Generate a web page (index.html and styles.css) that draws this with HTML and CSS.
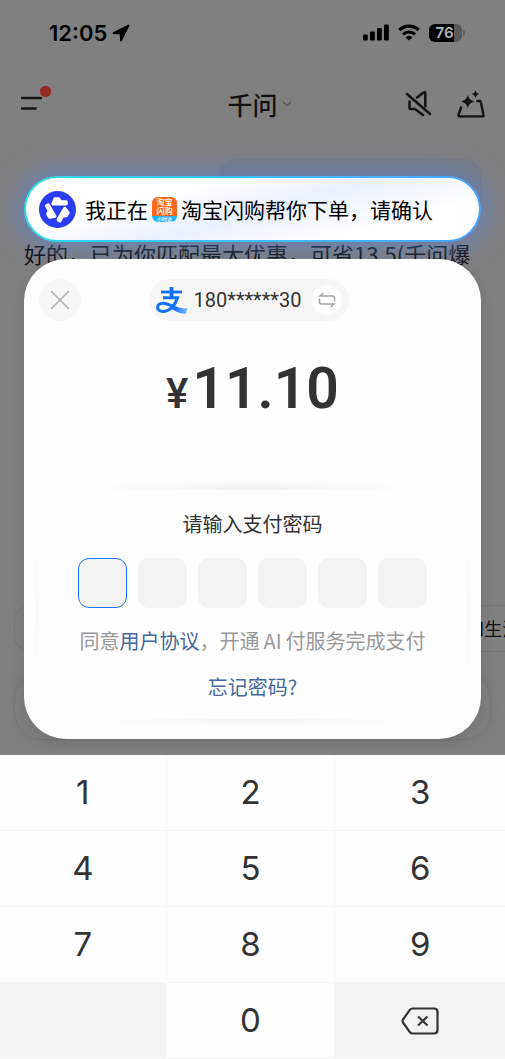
FILE: index.html
```html
<!DOCTYPE html>
<html lang="zh-CN">
<head>
<meta charset="utf-8">
<meta name="viewport" content="width=device-width, initial-scale=1">
<title>千问</title>
<link rel="stylesheet" href="styles.css">
</head>
<body>
<div class="screen">
  <div class="page">
    <div class="status">
      <div class="status-side">
        <span>12:05</span>
        <svg width="18" height="18" viewBox="0 0 18 18"><path d="M16.500 1.500 1.500 9l7 .5.500 7z" fill="#000" stroke="#000" stroke-width="1.800" stroke-linejoin="round"/></svg>
      </div>
      <div class="status-side status-icons">
        <svg width="26" height="17" viewBox="0 0 26 17"><rect y="10.500" width="4.800" height="6" rx="1.300"/><rect x="7" y="7.500" width="4.800" height="9" rx="1.300"/><rect x="14" y="4" width="4.800" height="12.500" rx="1.300"/><rect x="21" y=".5" width="4.800" height="16" rx="1.300"/></svg>
        <svg width="22" height="17" viewBox="0 0 22 17"><g fill="none" stroke="#000" stroke-width="3.200"><path d="M1.300 6.200a13.800 13.800 0 0 1 19.400 0"/><path d="M5 10.400a8.700 8.700 0 0 1 12 0"/></g><path d="M11 16.500 7.700 13.400a4.800 4.800 0 0 1 6.600 0z"/></svg>
        <span class="battery"><b>76</b></span>
      </div>
    </div>
    <header class="topbar">
      <button class="icon-btn menu" aria-label="菜单">
        <svg width="34" height="32" viewBox="0 0 34 32"><path d="M1 15h21M1 25.500h15.500" stroke="#151515" stroke-width="2.600" fill="none"/><circle cx="25.500" cy="8.500" r="7" fill="#808080"/><circle cx="25.500" cy="8.500" r="5.700" fill="#902b23"/></svg>
      </button>
      <h1 class="title">千问 <svg width="10" height="6" viewBox="0 0 10 6"><path d="m1 1 4 3.500L9 1" fill="none" stroke="#555" stroke-width="1.200"/></svg></h1>
      <div class="tools">
        <button class="icon-btn" aria-label="静音">
          <svg width="28" height="28" viewBox="0 0 28 28" fill="none" stroke="#151515" stroke-width="2.600" stroke-linecap="round" stroke-linejoin="round"><path d="m2 4 23 20M12 7.500l6.500-5c.9-.6 1.800-.2 1.800.8v13M4.500 11.500V18c0 .6.4 1 1 1h4.500l8 6"/></svg>
        </button>
        <button class="icon-btn" aria-label="新对话">
          <svg width="28" height="28" viewBox="0 0 28 28"><path d="M4 17.500 1.500 25q-.4 1.400 1 1.400h23q1.400 0 1-1.400L23.800 12q-.2-1-1.200-1h-2.200" fill="none" stroke="#151515" stroke-width="2.400" stroke-linecap="round"/><path d="M10.800 5q1.200 5.200 6.500 6.500-5.300 1.300-6.500 6.500-1.200-5.200-6.500-6.500 5.300-1.300 6.500-6.500zM18.500.4q.8 2.900 3.700 3.700-2.900.8-3.700 3.700-.8-2.900-3.700-3.700 2.900-.8 3.700-3.700z" fill="#151515"/></svg>
        </button>
      </div>
    </header>
    <main class="chat">
      <div class="bubble"></div>
      <p class="reply">好的，已为你匹配最大优惠，可省13.5(千问爆</p>
    </main>
    <div class="chips">
      <div class="chip"></div>
      <div class="chip chip-cut">AI生活</div>
    </div>
    <div class="composer"></div>
  </div>

  <div class="overlay">
    <div class="banner">
      <svg class="brand" width="37" height="37" viewBox="-18 -18 36 36">
        <circle r="18" fill="#2b3df2"/>
        <g fill="#fff" stroke="#fff" stroke-width="3" stroke-linejoin="round">
          <path id="arm" d="M-2.500-10.500H1L3-7.500H8.500V-5.500H-4.500z"/>
          <use href="#arm" transform="rotate(120)"/>
          <use href="#arm" transform="rotate(240)"/>
        </g>
      </svg>
      <p class="banner-text">我正在 <span class="shop"><span>淘宝</span><span>闪购</span><small>小时达</small></span> 淘宝闪购帮你下单，请确认</p>
    </div>

    <section class="sheet" aria-label="支付">
      <div class="sheet-head">
        <button class="close" aria-label="关闭"><svg width="20" height="20" viewBox="0 0 20 20"><path d="m1 1 18 18M19 1 1 19" stroke="#b0b0b0" stroke-width="1.600"/></svg></button>
        <div class="account">
          <svg width="32" height="28" viewBox="0 0 32 28">
            <defs><linearGradient id="ali"><stop offset=".3" stop-color="#1272ff"/><stop offset="1" stop-color="#8fbcff"/></linearGradient></defs>
            <g fill="none" stroke="#1272ff"><path d="M5 6h21" stroke-width="2.800"/><path d="M15.500 1v10.500" stroke-width="3.800"/><path d="M7 11.800h14.500C19.500 18.500 14 25.500 7 25.500c-7.500 0-7-8.300 0-8.300 4 0 8 2.200 12 4.300" stroke-width="3"/></g>
            <path d="M15.500 18.400c5.500 2.900 10 3.900 16 3.900l-1.500 5.500c-6.500 0-11.500-3-16-5.800z" fill="url(#ali)"/>
          </svg>
          <span>180******30</span>
          <button class="swap" aria-label="切换账号"><svg width="18" height="16" viewBox="0 0 18 16" fill="none" stroke="#a2a2a2" stroke-width="1.500"><path d="M5.500 1 2 4h12.500q2 0 2 2v3.500M1.500 6.500V10q0 2 2 2H16l-3.500 3"/></svg></button>
        </div>
      </div>
      <div class="amount"><span class="yen">¥</span>11.10</div>
      <form class="pay">
        <h2 class="prompt">请输入支付密码</h2>
        <div class="cells">
          <input class="cell active" type="password" maxlength="1" aria-label="密码第1位">
          <input class="cell" type="password" maxlength="1" aria-label="密码第2位">
          <input class="cell" type="password" maxlength="1" aria-label="密码第3位">
          <input class="cell" type="password" maxlength="1" aria-label="密码第4位">
          <input class="cell" type="password" maxlength="1" aria-label="密码第5位">
          <input class="cell" type="password" maxlength="1" aria-label="密码第6位">
        </div>
        <p class="terms">同意<a href="#terms">用户协议</a>，开通<span class="latin">AI</span>付服务完成支付</p>
        <a class="forgot" href="#forgot">忘记密码?</a>
      </form>
    </section>

    <div class="keypad">
      <button>1</button><button>2</button><button>3</button>
      <button>4</button><button>5</button><button>6</button>
      <button>7</button><button>8</button><button>9</button>
      <span class="blank"></span><button>0</button>
      <button class="blank" aria-label="删除"><svg width="38" height="28" viewBox="0 0 38 28" fill="none" stroke="#333" stroke-width="2.200" stroke-linejoin="round"><path d="M11.500 1.500H33q3.500 0 3.500 3.500v18q0 3.500-3.500 3.500H11.500q-1.500 0-2.500-1.200L2 15.500q-1-1.500 0-3L9 2.700q1-1.200 2.500-1.200z"/><path d="m17 9.500 9.500 9M26.500 9.500l-9.500 9"/></svg></button>
    </div>
  </div>
</div>
</body>
</html>
```

FILE: styles.css
```css
* { box-sizing: border-box; }

body {
  margin: 0;
  background: #808080;
  color: #111;
  font-family: "Noto Sans CJK SC", sans-serif;
}

p, h1, h2 { margin: 0; font-weight: 400; }
svg { display: block; flex: none; }
a { color: #45689c; text-decoration: none; }

button {
  display: grid;
  place-items: center;
  padding: 0;
  border: 0;
  background: none;
  font: inherit;
  color: inherit;
}

/* The page and the payment layer share one grid cell. */
.screen {
  display: grid;
  grid-template-columns: minmax(0, 1fr);
  min-height: 100vh;
}

.page, .overlay {
  grid-area: 1 / 1;
  display: flex;
  flex-direction: column;
}

/* Status bar */
.status {
  display: flex;
  justify-content: space-between;
  align-items: center;
  height: 65px;
  padding: 0 43px 0 49px;
  color: #000;
  font: 600 22px/1 Inter, sans-serif;
}

.status-side { display: flex; align-items: center; gap: 5px; }
.status-icons { gap: 9px; }

.battery {
  position: relative;
  display: grid;
  place-items: center;
  width: 33px;
  height: 18px;
  padding-right: 2px;
  border-radius: 6px;
  background: linear-gradient(90deg, #000 76%, #595959 76%);
  color: #b4b4b4;
  font-size: 15px;
}

.battery::after {
  content: "";
  position: absolute;
  left: 100%;
  top: 6px;
  width: 2px;
  height: 6px;
  margin-left: 1px;
  border-radius: 0 2px 2px 0;
  background: #606060;
}

.battery b { font-weight: 600; }

/* Top bar */
.topbar {
  display: grid;
  grid-template-columns: 1fr auto 1fr;
  align-items: center;
  height: 78px;
  padding: 0 20px;
}

.menu { justify-self: start; padding-bottom: 10px; }

.title {
  display: flex;
  align-items: center;
  gap: 4px;
  padding-left: 14px;
  font-size: 25px;
  line-height: 36px;
  font-weight: 500;
}

.tools { display: flex; justify-self: end; gap: 24px; }

/* Conversation */
.chat { flex: 1; padding: 16px 24px 0; }

.bubble {
  width: 262px;
  height: 66px;
  margin-left: auto;
  border-radius: 16px;
  background: #797b81;
}

.reply {
  margin-top: 12px;
  overflow: hidden;
  white-space: nowrap;
  font-size: 22px;
  line-height: 32px;
}

.chips { display: flex; gap: 6px; padding-left: 14px; }

.chip {
  flex: 1;
  height: 47px;
  border: 1px solid #767676;
  border-radius: 16px;
}

.chip-cut {
  flex: none;
  width: 46px;
  padding-left: 8px;
  overflow: hidden;
  border-right: 0;
  border-radius: 16px 0 0 16px;
  white-space: nowrap;
  font-size: 18px;
  line-height: 45px;
}

.composer {
  height: 68px;
  margin: 20px 14px 319px;
  border: 1px solid #777;
  border-radius: 28px;
  box-shadow: 0 0 14px rgba(0, 0, 0, .06);
}

/* Payment layer */
.overlay { z-index: 1; padding-top: 176px; }

.banner {
  display: flex;
  align-items: center;
  gap: 9px;
  height: 66px;
  margin: 0 24px;
  padding: 0 13px;
  border: 2px solid transparent;
  border-radius: 33px;
  background:
    linear-gradient(165deg, #fff 30%, #e9f0ff 52%, #fff 78%) padding-box,
    linear-gradient(90deg, #2bdbe9, #4ba3ff) border-box;
  box-shadow: 0 0 26px 6px rgba(92, 128, 214, .62);
}

.banner-text {
  display: flex;
  align-items: center;
  gap: 4px;
  white-space: nowrap;
  color: #000;
  font-size: 21px;
  line-height: 32px;
}

.shop {
  display: flex;
  flex-direction: column;
  align-items: center;
  width: 25px;
  height: 25px;
  overflow: hidden;
  border-radius: 6px;
  background: linear-gradient(#ff6a1a 0 19px, #25b4f5 19px);
  color: #fff;
  font-size: 8px;
  line-height: 9px;
  font-weight: 500;
}

.shop small { font-size: 5px; line-height: 7px; }

.sheet {
  margin: 17px 24px 16px;
  padding-top: 20px;
  border-radius: 42px;
  background: #fefefe;
  box-shadow: 0 4px 14px rgba(0, 0, 0, .12);
  color: #333;
}

.sheet-head {
  display: grid;
  grid-template-columns: 1fr auto 1fr;
  align-items: center;
  padding: 0 22px 0 15px;
}

.close {
  width: 42px;
  height: 42px;
  border-radius: 50%;
  background: #f7f7f7;
}

.account {
  display: flex;
  align-items: center;
  gap: 6px;
  height: 42px;
  padding: 0 7px;
  border-radius: 21px;
  background: #f6f6f6;
  font: 20px/1 Roboto, sans-serif;
}

.swap {
  width: 30px;
  height: 30px;
  margin-left: 5px;
  border-radius: 50%;
  background: #fff;
}

.amount {
  display: flex;
  justify-content: center;
  align-items: baseline;
  gap: 4px;
  padding: 34px 0 50px;
  font: 600 57px/68px Roboto, sans-serif;
}

.yen { font-size: 42px; font-weight: 500; }

.pay {
  display: flex;
  flex-direction: column;
  align-items: center;
  padding: 30px 0 36px;
  background:
    radial-gradient(farthest-side at 50% 100%, #f3f3f3, #fefefe) 50% 0 / 330px 12px no-repeat,
    radial-gradient(farthest-side at 50% 0, #f5f5f5, #fefefe) 50% calc(100% - 10px) / 330px 10px no-repeat,
    radial-gradient(farthest-side at 100% 50%, #f7f7f7, #fefefe) 7px 52% / 8px 130px no-repeat,
    radial-gradient(farthest-side at 0 50%, #f7f7f7, #fefefe) calc(100% - 7px) 52% / 8px 130px no-repeat;
}

.prompt { font-size: 20px; line-height: 32px; }

.cells { display: flex; gap: 11px; margin-top: 18px; }

.cell {
  width: 49px;
  height: 50px;
  padding: 0;
  border: 1px solid #f3f3f3;
  border-radius: 11px;
  outline: 0;
  background: #f3f3f3;
  text-align: center;
  font-size: 24px;
}

.cell.active { border-color: #1677ff; }

.terms {
  margin-top: 17px;
  color: #999;
  font-size: 20px;
  line-height: 32px;
  white-space: nowrap;
}

.latin { margin: 0 4px; }

.forgot { margin-top: 14px; font-size: 20px; line-height: 32px; }

/* Number pad */
.keypad {
  display: grid;
  grid-template-columns: 166fr 168fr 170fr;
  grid-auto-rows: 75px;
  gap: 1px;
  flex: 1;
  background: #f7f7f7;
  color: #333;
  font: 33px/1 Inter, sans-serif;
}

.keypad button { background: #fefefe; }
.keypad .blank { background: #f3f3f3; }
```
